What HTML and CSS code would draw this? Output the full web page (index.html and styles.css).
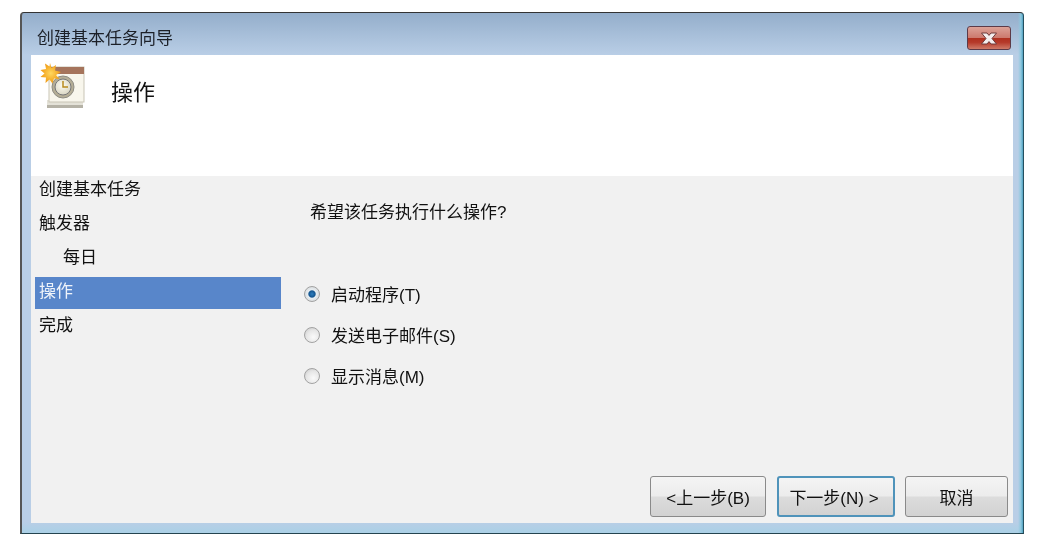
FILE: index.html

```html
<!DOCTYPE html>
<html lang="zh-CN">
<head>
  <meta charset="UTF-8">
  <title>创建基本任务向导</title>
  <link rel="stylesheet" href="styles.css">
</head>
<body>
  <div class="window">
    <div class="titlebar">
      <span class="title-text">创建基本任务向导</span>
      <button class="close-button" aria-label="关闭">
        <svg width="18" height="13" viewBox="0 0 18 13">
          <path d="M1.500 1h5.500l2 2.400L11 1h5.500l-4.500 5.500 4.500 5.500H11L9 9.600 7 12H1.500L6 6.500z" fill="#f4eeee" stroke="#6e3a3a" stroke-width="1"/>
        </svg>
      </button>
    </div>

    <div class="client">
      <div class="header">
        <svg class="header-icon" width="44" height="44" viewBox="0 0 44 44">
          <defs>
            <radialGradient id="sun" cx="0.5" cy="0.5" r="0.5">
              <stop offset="0" stop-color="#ffd860"/>
              <stop offset="1" stop-color="#f09a12"/>
            </radialGradient>
            <radialGradient id="face" cx="0.45" cy="0.4" r="0.6">
              <stop offset="0" stop-color="#fdfbf0"/>
              <stop offset="1" stop-color="#d9d6c4"/>
            </radialGradient>
          </defs>
          <rect x="7" y="37" width="36" height="6" fill="#b5b2a6"/>
          <rect x="7" y="35" width="36" height="5" fill="#e4e2d8"/>
          <rect x="9" y="2" width="35" height="35" fill="#f8f6ec" stroke="#c9c5b6"/>
          <rect x="9" y="2" width="35" height="7" fill="#a5745c"/>
          <circle cx="23" cy="22" r="11" fill="#b5ae96" stroke="#8f8d84"/>
          <circle cx="23" cy="22" r="8" fill="url(#face)" stroke="#777"/>
          <path d="M23 16v6h5" fill="none" stroke="#b88a1e" stroke-width="1.500"/>
          <path d="M10 -2l1.500 5 4.500-3-1 5.500 6 1.500-5 3 3.500 4-5.500-.5-1.500 5-3-4-4 3.500.5-5.500-5.500-.5 4-3.500-4-3.500 5.500-1-1-5.500 4.500 3z" fill="url(#sun)"/>
        </svg>
        <h1 class="header-title">操作</h1>
      </div>

      <div class="body">
        <ul class="steps">
          <li class="step">创建基本任务</li>
          <li class="step">触发器</li>
          <li class="step step-sub">每日</li>
          <li class="step step-active">操作</li>
          <li class="step">完成</li>
        </ul>

        <div class="pane">
          <p class="question">希望该任务执行什么操作?</p>
          <div class="options">
            <label class="option"><input type="radio" name="action" checked>启动程序(T)</label>
            <label class="option"><input type="radio" name="action">发送电子邮件(S)</label>
            <label class="option"><input type="radio" name="action">显示消息(M)</label>
          </div>
          <div class="footer">
            <button class="btn btn-back">&lt;上一步(B)</button>
            <button class="btn btn-next">下一步(N) &gt;</button>
            <button class="btn btn-cancel">取消</button>
          </div>
        </div>
      </div>
    </div>
  </div>
</body>
</html>
```

FILE: styles.css

```css
body {
  margin: 0;
  background-color: white;
  font-family: "Liberation Sans", "Noto Sans CJK SC", sans-serif;
  font-size: 17px;
  color: #111;
}

/* the reference is a slightly soft, upscaled capture */
.window {
  box-sizing: border-box;
  display: flex;
  flex-direction: column;
  width: 1004px;
  height: 522px;
  margin: 12px 0 0 20px;
  padding: 0 10px 10px 9px;
  border-top: 1px solid #333;
  border-left: 2px solid #555;
  border-right: 1px solid #24505f;
  border-bottom: 1px solid #24444f;
  border-radius: 4px 4px 0 0;
  background-color: #bcd0e8;
  background-image:
    linear-gradient(to left, #4f9fc0 0, #8cc8de 2px, rgba(188,208,232,0) 5px),
    linear-gradient(to bottom, rgba(188,208,232,0) 509px, #acd0e6 518px),
    linear-gradient(to bottom, #94aecb 0, #b9cee6 42px);
  filter: blur(0.4px);
}

.titlebar {
  display: flex;
  justify-content: space-between;
  align-items: center;
  height: 42px;
  box-sizing: border-box;
  padding: 13px 2px 5px 6px;
}

.title-text {
  padding-top: 2px;
  line-height: 24px;
  color: #1c2028;
}

.close-button {
  display: flex;
  align-items: center;
  justify-content: center;
  width: 44px;
  height: 24px;
  padding: 0;
  border: 1px solid #5c3a48;
  border-radius: 3px;
  background-image: linear-gradient(to bottom, #dca298 0, #cd7a6e 48%, #b0301f 52%, #b63a2a 70%, #cf7a68 100%);
}

.client {
  flex: 1;
  display: flex;
  flex-direction: column;
  min-height: 0;
}

.header {
  display: flex;
  align-items: flex-start;
  gap: 27px;
  box-sizing: border-box;
  height: 121px;
  padding: 10px 0 0 9px;
  background-color: white;
}

.header-icon {
  overflow: visible;
}

.header-title {
  margin: 6px 0 0;
  font-size: 22px;
  font-weight: normal;
  line-height: 44px;
  color: #111;
}

.body {
  flex: 1;
  display: flex;
  background-color: #f1f1f1;
}

.steps {
  display: flex;
  flex-direction: column;
  gap: 2px;
  box-sizing: border-box;
  width: 250px;
  margin: -1px 0 0;
  padding: 0 0 0 4px;
  list-style: none;
}

.step {
  box-sizing: border-box;
  height: 32px;
  padding: 0 0 2px 4px;
  line-height: 30px;
}

.step-sub {
  padding-left: 28px;
}

.step-active {
  padding-left: 4px;
  background-color: #5886ca;
  color: #eef3fa;
}

.pane {
  flex: 1;
  display: flex;
  flex-direction: column;
  padding: 0 5px 6px 23px;
}

.question {
  margin: 25px 0 0 6px;
  line-height: 24px;
}

.options {
  display: flex;
  flex-direction: column;
  margin-top: 48px;
}

.option {
  display: flex;
  align-items: center;
  gap: 11px;
  height: 41px;
}

.option input {
  appearance: none;
  flex: none;
  width: 16px;
  height: 16px;
  margin: 0;
  border: 1px solid #a2a2a2;
  border-radius: 50%;
  background-image: radial-gradient(circle at 60% 65%, #fafafa 0, #e6e6e6 55%, #c4c4c4 100%);
}

.option input:checked {
  background-image: radial-gradient(circle, #2f7fc0 0, #14558f 32%, #e8eef2 42%, #cfcfcf 100%);
}

.footer {
  display: flex;
  justify-content: flex-end;
  margin-top: auto;
}

.btn {
  height: 41px;
  padding: 0;
  border: 1px solid #8a8a8a;
  border-radius: 3px;
  background-image: linear-gradient(to bottom, #f4f4f4 0, #ececec 48%, #dcdcdc 52%, #d2d2d2 100%);
  font: inherit;
  color: #111;
}

.btn-back {
  width: 116px;
}

.btn-next {
  width: 118px;
  margin-left: 11px;
  padding-right: 4px;
  border: 2px solid #4f93ba;
}

.btn-cancel {
  width: 103px;
  margin-left: 10px;
}
```
